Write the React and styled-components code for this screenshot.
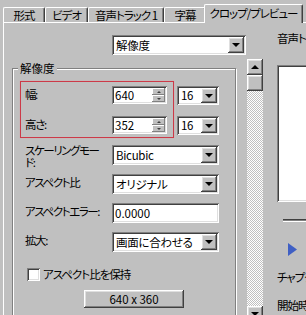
import React from 'react'
import styled, { createGlobalStyle } from 'styled-components'

const GlobalStyle = createGlobalStyle`
body {
  margin: 0;
  background: #c0c0c0;
}
`

const raised = `
box-shadow: inset -1px -1px #404040, inset 1px 1px #fff, inset -2px -2px #808080, inset 2px 2px #dfdfdf;
`

const sunken = `
box-shadow: inset 1px 1px #808080, inset -1px -1px #fff, inset 2px 2px #404040, inset -2px -2px #dfdfdf;
`

const Screen = styled.div`
width: 306px;
height: 315px;
overflow: hidden;
background: #c0c0c0;
font-family: "Noto Sans CJK JP", "Liberation Sans", sans-serif;
font-size: 11.5px;
letter-spacing: -1px;
font-feature-settings: "palt" 1;
color: #000;
`

const TabStrip = styled.div`
display: flex;
align-items: flex-end;
height: 22px;
padding-left: 3px;
`

const Tab = styled.div`
position: relative;
z-index: ${p => (p.$active ? 1 : 0)};
box-sizing: border-box;
width: ${p => p.$w}px;
height: ${p => (p.$active ? 19 : 15)}px;
margin: ${p => (p.$active ? '0 -2px -1px -2px' : '0')};
display: flex;
align-items: center;
justify-content: center;
background: #c0c0c0;
border-top: 1px solid #fff;
border-left: 1px solid #fff;
border-right: 1px solid #404040;
border-radius: 2px 2px 0 0;
box-shadow: inset -1px 0 #808080;
line-height: 13px;
white-space: nowrap;
padding-bottom: ${p => (p.$active ? 2 : 0)}px;
`

const Panel = styled.div`
display: flex;
align-items: flex-start;
margin-left: 3px;
border-top: 1px solid #fff;
border-left: 1px solid #fff;
height: 320px;
`

const LeftCol = styled.div`
width: 243px;
flex-shrink: 0;
`

const SelectBox = styled.div`
display: flex;
align-items: stretch;
box-sizing: border-box;
width: ${p => p.$w}px;
height: ${p => p.$h || 20}px;
margin-left: ${p => p.$ml || 0}px;
margin-top: ${p => p.$mt || 0}px;
padding: 2px;
background: #fff;
${sunken}
`

const SelectText = styled.span`
flex: 1;
padding-left: 2px;
line-height: ${p => (p.$h ? p.$h - 4 : 16)}px;
letter-spacing: -0.3px;
white-space: nowrap;
overflow: hidden;
`

const DropButton = styled.span`
width: 16px;
flex-shrink: 0;
display: flex;
align-items: center;
justify-content: center;
background: #c0c0c0;
${raised}
`

const DownTri = styled.span`
width: 0;
height: 0;
border-left: 4px solid transparent;
border-right: 4px solid transparent;
border-top: 4px solid #000;
`

const UpTri = styled.span`
width: 0;
height: 0;
border-left: 4px solid transparent;
border-right: 4px solid transparent;
border-bottom: 4px solid #000;
`

const GroupBox = styled.div`
position: relative;
box-sizing: border-box;
width: 224px;
height: 270px;
margin: 13px 0 0 8px;
padding: 12px 0 0 7px;
border: 1px solid #808080;
box-shadow: inset 1px 1px #fff, 1px 1px 0 #fff;
`

const Legend = styled.span`
position: absolute;
top: -8px;
left: 5px;
padding: 0 2px;
line-height: 14px;
letter-spacing: 0;
background: #c0c0c0;
`

const ResRow = styled.div`
display: flex;
align-items: flex-start;
`

const RedBox = styled.div`
box-sizing: border-box;
width: 154px;
padding: 4px 0 3px 4px;
border: 1px solid #cc3a48;
box-shadow: 0 0 1px 0 #e89aa0;
display: grid;
grid-template-columns: 87px 55px;
row-gap: 12px;
`

const FieldLabel = styled.div`
padding-top: 1px;
margin-top: ${p => (p.$lh ? -2 : 0)}px;
line-height: ${p => p.$lh || 14}px;
letter-spacing: -1.4px;
white-space: nowrap;
`

const SpinBox = styled.div`
display: flex;
box-sizing: border-box;
height: 18px;
padding: 2px;
background: #fff;
${sunken}
`

const SpinText = styled.span`
flex: 1;
padding-left: 1px;
line-height: 14px;
letter-spacing: 0;
`

const SpinButtons = styled.div`
display: flex;
flex-direction: column;
width: 13px;
`

const SpinHalf = styled.span`
flex: 1;
display: flex;
align-items: center;
justify-content: center;
background: #c0c0c0;
box-shadow: inset -1px -1px #808080, inset 1px 1px #fff;
`

const TinyUp = styled.span`
width: 0;
height: 0;
border-left: 2px solid transparent;
border-right: 2px solid transparent;
border-bottom: 2px solid #404040;
`

const TinyDown = styled.span`
width: 0;
height: 0;
border-left: 2px solid transparent;
border-right: 2px solid transparent;
border-top: 2px solid #404040;
`

const SizeCol = styled.div`
display: flex;
flex-direction: column;
gap: 11px;
margin: 5px 0 0 3px;
`

const FormGrid = styled.div`
display: grid;
grid-template-columns: 87px 107px;
grid-auto-rows: 20px;
row-gap: 9px;
margin-top: 7px;
padding-left: 5px;
`

const TextBox = styled.div`
box-sizing: border-box;
height: 20px;
padding: 2px 3px;
line-height: 16px;
letter-spacing: 0;
background: #fff;
${sunken}
`

const CheckRow = styled.label`
display: flex;
align-items: center;
gap: 3px;
height: 13px;
margin-top: 16px;
padding-left: 7px;
line-height: 13px;
`

const CheckBox = styled.span`
width: 13px;
height: 13px;
box-sizing: border-box;
background: #fff;
${sunken}
`

const PushButton = styled.div`
box-sizing: border-box;
width: 100px;
height: 18px;
margin: 9px 0 0 64px;
display: flex;
align-items: center;
justify-content: center;
line-height: 14px;
letter-spacing: 0;
white-space: pre;
background: #c0c0c0;
${raised}
`

const ScrollBar = styled.div`
display: flex;
flex-direction: column;
width: 16px;
height: 263px;
margin-top: 36px;
flex-shrink: 0;
`

const ScrollButton = styled.div`
height: 16px;
flex-shrink: 0;
display: flex;
align-items: center;
justify-content: center;
background: #c0c0c0;
${raised}
`

const ScrollTrack = styled.div`
flex: 1;
background: repeating-conic-gradient(#fff 0 25%, #c0c0c0 0 50%) 0 0 / 2px 2px;
`

const RightCol = styled.div`
padding-left: 14px;
width: 120px;
flex-shrink: 0;
`

const SideText = styled.div`
margin-top: ${p => p.$mt}px;
line-height: 14px;
white-space: nowrap;
`

const Preview = styled.div`
margin-top: 20px;
height: 137px;
width: 110px;
background: #fff;
${sunken}
`

const SliderTrack = styled.div`
margin: 17px 0 0 6px;
height: 3px;
width: 100px;
box-shadow: inset 0 1px #404040, inset 0 2px #808080, inset 0 -1px #fff;
`

const PlayIcon = styled.svg`
display: block;
margin: 21px 0 0 11px;
`

const Select = ({ w, h, ml, mt, children }) => (
  <SelectBox $w={w} $h={h} $ml={ml} $mt={mt}>
    <SelectText $h={h}>{children}</SelectText>
    <DropButton><DownTri /></DropButton>
  </SelectBox>
)

const Spin = ({ value }) => (
  <SpinBox>
    <SpinText>{value}</SpinText>
    <SpinButtons>
      <SpinHalf><TinyUp /></SpinHalf>
      <SpinHalf><TinyDown /></SpinHalf>
    </SpinButtons>
  </SpinBox>
)

const tabs = [
  { label: '形式', w: 42 },
  { label: 'ビデオ', w: 43 },
  { label: '音声トラック 1', w: 76 },
  { label: '字幕', w: 42 },
  { label: 'クロップ/プレビュー', w: 99, active: true },
]

export default function App() {
  return (
    <Screen>
      <GlobalStyle />
      <TabStrip>
        {tabs.map(t => (
          <Tab key={t.label} $w={t.w} $active={t.active}>{t.label}</Tab>
        ))}
      </TabStrip>
      <Panel>
        <LeftCol>
          <Select w={134} ml={108} mt={12}>解像度</Select>
          <GroupBox>
            <Legend>解像度</Legend>
            <ResRow>
              <RedBox>
                <FieldLabel>幅:</FieldLabel>
                <Spin value="640" />
                <FieldLabel>高さ:</FieldLabel>
                <Spin value="352" />
              </RedBox>
              <SizeCol>
                <Select w={42} h={19}>16</Select>
                <Select w={42} h={19}>16</Select>
              </SizeCol>
            </ResRow>
            <FormGrid>
              <FieldLabel $lh={12}>スケーリングモー<br />ド:</FieldLabel>
              <Select w={107}>Bicubic</Select>
              <FieldLabel>アスペクト比</FieldLabel>
              <Select w={107}>オリジナル</Select>
              <FieldLabel>アスペクトエラー:</FieldLabel>
              <TextBox>0.0000</TextBox>
              <FieldLabel>拡大:</FieldLabel>
              <Select w={107}>画面に合わせる</Select>
            </FormGrid>
            <CheckRow>
              <CheckBox />
              アスペクト比を保持
            </CheckRow>
            <PushButton>640 x 360</PushButton>
          </GroupBox>
        </LeftCol>
        <ScrollBar>
          <ScrollButton><UpTri /></ScrollButton>
          <ScrollButton />
          <ScrollTrack />
          <ScrollButton><DownTri /></ScrollButton>
        </ScrollBar>
        <RightCol>
          <SideText $mt={8}>音声トラック</SideText>
          <Preview />
          <SliderTrack />
          <PlayIcon width="9" height="13" viewBox="0 0 9 13">
            <polygon points="0,0 9,6.5 0,13" fill="#3f5fc4" />
          </PlayIcon>
          <SideText $mt={14}>チャプター:</SideText>
          <SideText $mt={14}>開始時間:</SideText>
        </RightCol>
      </Panel>
    </Screen>
  )
}
